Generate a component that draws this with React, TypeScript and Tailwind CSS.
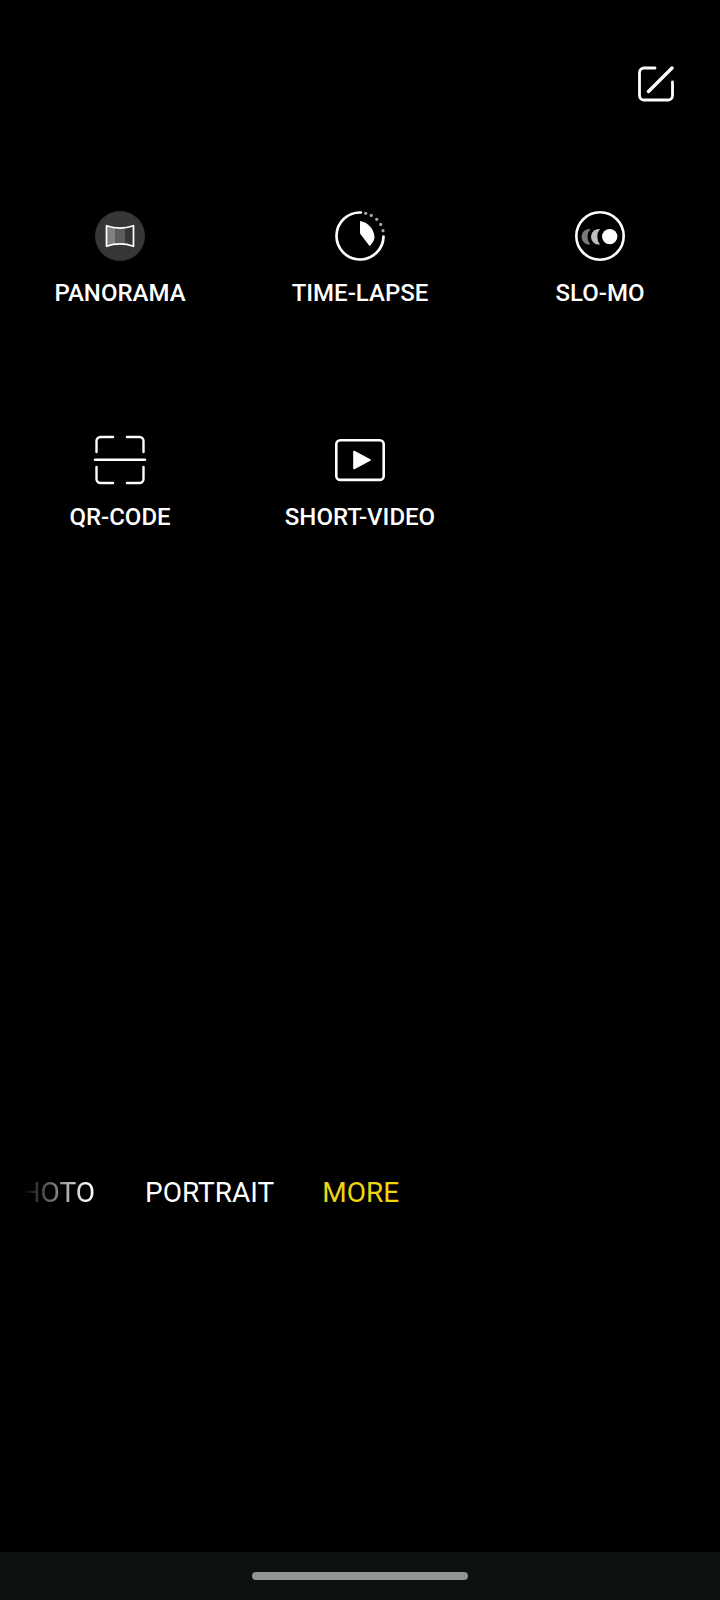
const W = "#ffffff";

function Panorama() {
  return (
    <svg width="50" height="50" viewBox="0 0 50 50">
      <circle cx="25" cy="25" r="25" fill="#363636" />
      <path d="M12 15 Q16 16.5 20 17 V33 Q16 33.5 12 35Z" fill="#808080" />
      <path d="M20 17 Q25 17.6 30 17 V33 Q25 32.4 20 33Z" fill="#5c5c5c" />
      <path d="M11.5 14.7 Q25 19.5 38.5 14.7 V35.3 Q25 30.5 11.5 35.3Z" fill="none" stroke={W} strokeWidth="1.7" strokeLinejoin="round" />
    </svg>
  );
}

function TimeLapse() {
  const dots = [[30.7, 2.3], [36.3, 4.4], [41.7, 8.3], [45.7, 13.4], [48, 19.7]];
  return (
    <svg width="50" height="50" viewBox="0 0 50 50">
      <path d="M25.8 1.5 A23.5 23.5 0 1 0 48.5 25.6" fill="none" stroke={W} strokeWidth="2.7" strokeLinecap="round" />
      {dots.map(([x, y]) => (
        <circle key={x} cx={x} cy={y} r="1.6" fill="#a8a8a8" />
      ))}
      <path d="M25 10 C33 11 39 18 39.5 26 C39.5 29 37 33 34.5 35 L25 22.5Z" fill={W} />
    </svg>
  );
}

function SloMo() {
  return (
    <svg width="50" height="50" viewBox="0 0 50 50">
      <circle cx="25" cy="25" r="23.7" fill="none" stroke={W} strokeWidth="2.6" />
      <path d="M15.5 18 A7.8 7.8 0 1 0 15.5 33.4 A11.4 11.4 0 0 1 15.5 18Z" fill="#787878" />
      <path d="M25 18 A7.8 7.8 0 1 0 25 33.4 A12.3 12.3 0 0 1 25 18Z" fill="#bdbdbd" />
      <circle cx="34.7" cy="25.6" r="7.7" fill={W} />
    </svg>
  );
}

function QrCode() {
  return (
    <svg width="50" height="50" viewBox="0 0 50 50" className="overflow-visible">
      <path
        d="M18 2 H5.5 A4 4 0 0 0 1.5 6 V17 M32 2 H44.5 A4 4 0 0 1 48.5 6 V17 M18 48 H5.5 A4 4 0 0 1 1.5 44 V32 M32 48 H44.5 A4 4 0 0 0 48.5 44 V32"
        fill="none"
        stroke={W}
        strokeWidth="2.4"
        strokeLinecap="round"
      />
      <path d="M0 24.8 H50" stroke={W} strokeWidth="2.6" strokeLinecap="round" />
    </svg>
  );
}

function ShortVideo() {
  return (
    <svg width="50" height="50" viewBox="0 0 50 50">
      <rect x="1.3" y="5.3" width="47.4" height="39.6" rx="4" fill="none" stroke={W} strokeWidth="2.6" />
      <path d="M19 16.5 L35 25 L19 33.5Z" fill={W} stroke={W} strokeWidth="1.6" strokeLinejoin="round" />
    </svg>
  );
}

function EditIcon() {
  return (
    <svg width="36" height="36" viewBox="0 0 36 36">
      <path
        d="M17 2 H6 A4.5 4.5 0 0 0 1.5 6.5 V29.5 A4.5 4.5 0 0 0 6 34 H30 A4.5 4.5 0 0 0 34.5 29.5 V16"
        fill="none"
        stroke={W}
        strokeWidth="2.8"
        strokeLinecap="round"
      />
      <path d="M10.5 25.5 L34 2" fill="none" stroke={W} strokeWidth="3.4" strokeLinecap="round" />
    </svg>
  );
}

function Mode({ icon, label }: { icon: React.ReactNode; label: string }) {
  return (
    <div className="flex flex-col items-center h-[224px]">
      {icon}
      <span className="mt-[17px] text-[24px] leading-[30px] font-medium text-white whitespace-nowrap">{label}</span>
    </div>
  );
}

export default function App() {
  return (
    <div className="w-[720px] h-[1600px] bg-black flex flex-col font-['Roboto',sans-serif]">
      <div className="flex justify-end pt-[66px] pr-[46px] h-[211px]">
        <EditIcon />
      </div>
      <div className="grid grid-cols-3 content-start h-[720px]">
        <Mode icon={<Panorama />} label="PANORAMA" />
        <Mode icon={<TimeLapse />} label="TIME-LAPSE" />
        <Mode icon={<SloMo />} label="SLO-MO" />
        <Mode icon={<QrCode />} label="QR-CODE" />
        <Mode icon={<ShortVideo />} label="SHORT-VIDEO" />
      </div>
      <div className="flex items-center h-[40px] mt-[242px] pl-[24px] text-[28px] leading-[40px] text-white whitespace-nowrap">
        <div className="w-[71px] flex justify-end overflow-hidden [mask-image:linear-gradient(to_right,transparent,black_64px)]">
          <span>PHOTO</span>
        </div>
        <span className="ml-[50px]">PORTRAIT</span>
        <span className="ml-[48px] text-[#eed512]">MORE</span>
      </div>
      <div className="flex-1" />
      <div className="h-[48px] bg-[#0c1212] flex items-center justify-center">
        <div className="w-[216px] h-[8px] rounded-full bg-[#909494]" />
      </div>
    </div>
  );
}
